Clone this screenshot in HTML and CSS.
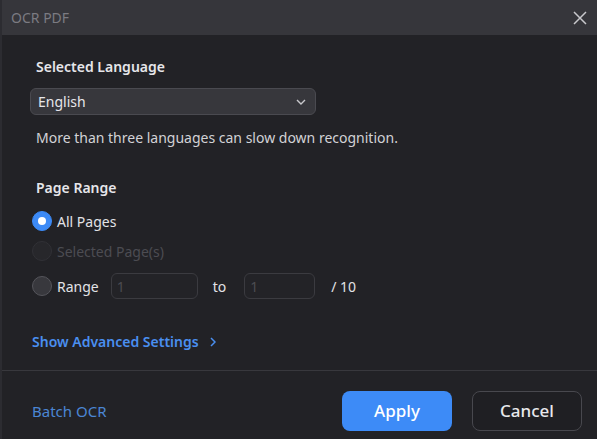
FILE: index.html
```html
<!DOCTYPE html>
<html>
<head>
    <title>OCR PDF</title>
    <link rel="stylesheet" href="styles.css">
</head>
<body>
    <div class="dialog">
        <div class="titlebar">
            <span class="title">OCR PDF</span>
            <svg class="close" width="14" height="14" viewBox="0 0 14 14">
                <path d="M1 1L13 13M13 1L1 13" stroke="#c8c8cc" stroke-width="1.5" fill="none"/>
            </svg>
        </div>

        <div class="content">
            <div class="heading lang-heading">Selected Language</div>
            <div class="select">
                <span>English</span>
                <svg width="10" height="6" viewBox="0 0 10 6">
                    <path d="M1 1L5 5L9 1" stroke="#c8c8cc" stroke-width="1.4" fill="none"/>
                </svg>
            </div>
            <div class="note">More than three languages can slow down recognition.</div>

            <div class="heading range-heading">Page Range</div>
            <div class="radio-row first">
                <span class="radio checked"></span>
                <span class="label">All Pages</span>
            </div>
            <div class="radio-row disabled">
                <span class="radio"></span>
                <span class="label">Selected Page(s)</span>
            </div>
            <div class="radio-row range">
                <span class="radio"></span>
                <span class="label">Range</span>
                <input class="page-input from" type="text" value="1" disabled>
                <span class="to">to</span>
                <input class="page-input until" type="text" value="1" disabled>
                <span class="total">/ 10</span>
            </div>

            <div class="advanced">
                Show Advanced Settings
                <svg width="6" height="10" viewBox="0 0 6 10">
                    <path d="M1 1L5 5L1 9" stroke="#4a8ff0" stroke-width="1.5" fill="none"/>
                </svg>
            </div>
        </div>

        <div class="footer">
            <span class="batch">Batch OCR</span>
            <div class="buttons">
                <button class="btn apply">Apply</button>
                <button class="btn cancel">Cancel</button>
            </div>
        </div>
    </div>
</body>
</html>
```

FILE: styles.css
```css
body {
    margin: 0;
    background: #222226;
    font-family: "Noto Sans", "Open Sans", sans-serif;
    color: #dcdce0;
}
.dialog {
    width: 597px;
    height: 439px;
    display: flex;
    flex-direction: column;
    background: #222226;
    border-left: 2px solid #2c2c31;
    box-sizing: border-box;
}
.titlebar {
    height: 35px;
    background: #36363b;
    display: flex;
    align-items: center;
    justify-content: space-between;
    padding: 0 10px 0 9px;
    flex-shrink: 0;
}
.title {
    font-size: 14px;
    color: #7b7b82;
}
.close {
    margin-top: 1px;
}
.content {
    flex: 1;
    display: flex;
    flex-direction: column;
    align-items: flex-start;
    padding-left: 28px;
}
.heading {
    font-size: 14px;
    font-weight: 600;
    line-height: 20px;
    color: #e6e6ea;
    padding-left: 6px;
}
.lang-heading {
    margin-top: 22px;
}
.select {
    margin-top: 11px;
    width: 268px;
    height: 25px;
    background: #37373c;
    border: 1px solid #4a4a50;
    border-radius: 6px;
    display: flex;
    align-items: center;
    justify-content: space-between;
    padding: 0 9px 0 7px;
    font-size: 14px;
    color: #e6e6ea;
}
.note {
    margin-top: 13px;
    font-size: 14px;
    line-height: 20px;
    padding-left: 6px;
    color: #d2d2d6;
}
.range-heading {
    margin-top: 30px;
}
.radio-row {
    display: flex;
    align-items: center;
    height: 30px;
    font-size: 14px;
    color: #e2e2e6;
    padding-left: 2px;
}
.radio-row.first {
    margin-top: 8px;
}
.radio-row.range {
    margin-top: 5px;
}
.radio {
    width: 18px;
    height: 18px;
    border-radius: 50%;
    border: 1px solid #55555b;
    background: #38383d;
    margin-right: 5px;
    position: relative;
}
.radio.checked {
    background: #3c8af6;
    border-color: #3c8af6;
}
.radio.checked::after {
    content: "";
    position: absolute;
    left: 5px;
    top: 5px;
    width: 8px;
    height: 8px;
    border-radius: 50%;
    background: #fff;
}
.radio-row.disabled {
    color: #4c4c52;
}
.radio-row.disabled .radio {
    background: #27272b;
    border-color: #313136;
}
.page-input {
    height: 24px;
    background: #232327;
    border: 1px solid #3b3b40;
    border-radius: 6px;
    color: #4c4c52;
    font-family: inherit;
    font-size: 14px;
    padding: 0 5px;
}
.page-input.from {
    width: 75px;
    margin-left: 12px;
}
.page-input.until {
    width: 59px;
    margin-left: 18px;
}
.to {
    margin-left: 15px;
}
.total {
    margin-left: 16px;
}
.advanced {
    margin-top: 31px;
    font-size: 14px;
    font-weight: 600;
    line-height: 20px;
    color: #4a8ff0;
    padding-left: 2px;
    display: flex;
    align-items: center;
    gap: 11px;
}
.footer {
    height: 69px;
    border-top: 1px solid #38383d;
    display: flex;
    align-items: center;
    justify-content: space-between;
    padding: 11px 15px 0 30px;
    box-sizing: border-box;
    flex-shrink: 0;
}
.batch {
    font-size: 15px;
    color: #4b86d4;
}
.buttons {
    display: flex;
    gap: 20px;
}
.btn {
    width: 110px;
    height: 40px;
    border-radius: 8px;
    font-family: inherit;
    font-size: 17px;
    font-weight: 500;
}
.apply {
    background: #3d8bf7;
    border: none;
    color: #fff;
}
.cancel {
    background: #1f1f23;
    border: 1px solid #48484e;
    color: #e8e8ec;
}
```
